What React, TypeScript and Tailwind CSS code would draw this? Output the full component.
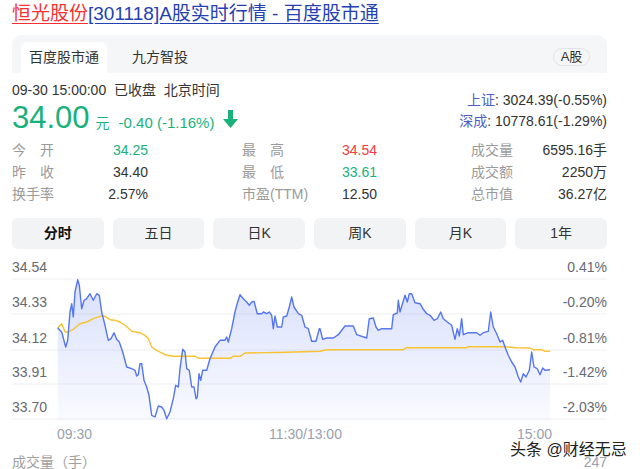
import React from "react";

// price line traced from the chart, [x, y] in 3x crop coords
const blueLeft: number[][] = [
  [173, 228], [185, 240], [197, 285], [203, 265], [210, 180], [215, 155], [220, 195], [225, 120],
  [233, 83], [238, 100], [245, 170], [252, 145], [260, 140], [270, 125], [280, 145], [290, 125],
  [298, 130], [305, 180], [315, 220], [325, 265], [333, 260], [342, 242], [350, 262], [358, 270],
  [368, 300], [380, 345], [395, 350], [405, 355], [410, 372], [415, 368], [420, 335], [425, 335],
  [432, 385], [440, 405], [447, 430], [455, 490], [465, 495], [475, 462], [485, 465], [492, 475],
  [500, 500], [510, 480], [520, 440], [527, 400], [535, 405], [540, 350], [548, 292], [555, 300],
  [560, 350], [568, 355], [575, 405], [582, 405], [588, 440], [592, 435], [597, 365], [602, 385],
  [608, 355], [620, 355], [630, 320], [645, 285], [660, 265], [675, 265], [680, 255], [685, 270],
  [695, 230], [705, 180], [710, 160], [720, 128], [730, 140], [740, 150], [748, 160], [755, 150],
  [762, 148], [772, 185], [785, 185], [790, 180], [800, 185], [808, 180], [815, 190], [820, 230],
  [825, 192], [832, 225], [845, 225], [850, 195], [860, 192], [868, 165], [875, 135], [882, 165],
  [895, 185], [905, 190], [915, 225], [925, 230], [935, 268], [948, 268], [958, 230],
];
const blueRight: number[][] = [
  [0, 230], [8, 262], [20, 258], [40, 258], [55, 248], [75, 222], [100, 222], [110, 248],
  [140, 258], [148, 200], [160, 198], [168, 225], [175, 235], [185, 230], [215, 230], [220, 188],
  [232, 183], [235, 145], [240, 180], [255, 130], [262, 150], [268, 125], [275, 125], [285, 152],
  [300, 155], [310, 172], [320, 185], [330, 190], [342, 205], [352, 200], [362, 180], [370, 200],
  [382, 210], [395, 220], [405, 262], [412, 230], [418, 252], [425, 200], [430, 248], [445, 242],
  [470, 242], [480, 250], [490, 242], [505, 238], [512, 180], [520, 225], [530, 245], [540, 270],
  [548, 265], [555, 285], [565, 310], [575, 330], [585, 345], [595, 375], [602, 390], [610, 365],
  [618, 375], [628, 355], [635, 300], [642, 345], [652, 350], [660, 368], [668, 348], [675, 355],
  [690, 353],
];
const avgLeft: number[][] = [
  [173, 228], [185, 215], [195, 240], [205, 240], [220, 232], [240, 215], [260, 210], [280, 200],
  [300, 193], [315, 193], [330, 203], [345, 205], [360, 210], [378, 222], [395, 238], [420, 242],
  [435, 250], [445, 260], [455, 285], [470, 295], [485, 303], [500, 310], [520, 313], [585, 313],
  [597, 319], [690, 319], [700, 313], [720, 313], [735, 303], [860, 301], [960, 298],
];
const avgRight: number[][] = [
  [0, 298], [20, 293], [250, 293], [260, 287], [440, 287], [445, 284], [555, 284], [590, 287],
  [630, 288], [640, 293], [665, 293], [675, 298], [690, 298],
];

const toPage = (pts: number[][], ox: number) =>
  pts.map(([x, y]) => [ox + x / 3, 250 + y / 3]);

const blue = [...toPage(blueLeft, 0), ...toPage(blueRight, 320)];
const avg = [...toPage(avgLeft, 0), ...toPage(avgRight, 320)];
const line = (pts: number[][]) =>
  pts.map(([x, y], i) => `${i ? "L" : "M"}${x.toFixed(1)} ${y.toFixed(1)}`).join(" ");

const grid = [277, 312, 348, 382, 417];
const leftLabels = ["34.54", "34.33", "34.12", "33.91", "33.70"];
const rightLabels = ["0.41%", "-0.20%", "-0.81%", "-1.42%", "-2.03%"];

function Stat({ label, value, color = "text-[#333]", spread }: { label: string; value: string; color?: string; spread?: boolean }) {
  return (
    <div className="flex justify-between">
      {spread ? (
        <span className="flex w-[42px] justify-between text-[#9a9a9a]">
          {label.split("").map((c) => (
            <span key={c}>{c}</span>
          ))}
        </span>
      ) : (
        <span className="text-[#9a9a9a]">{label}</span>
      )}
      <span className={color}>{value}</span>
    </div>
  );
}

export default function App() {
  return (
    <div
      className="relative w-[640px] h-[469px] overflow-hidden bg-white"
      style={{ fontFamily: '"Liberation Sans", "Noto Sans CJK SC", sans-serif' }}
    >
      {/* Title */}
      <div className="h-[35px] pl-[12px] pt-[1px] text-[19px] leading-[26px]">
        <a className="text-[#f73131] underline underline-offset-[3px]">恒光股份</a>
        <a className="text-[#2440b3] underline underline-offset-[3px]">[301118]A股实时行情 - 百度股市通</a>
      </div>

      {/* Tabs */}
      <div className="mx-[12px] flex h-[38px] w-[595px] items-end rounded-t-[10px] bg-[#f5f6f7] pl-[9px] pr-[17px]">
        <div className="h-[31px] w-[86px] rounded-t-[6px] bg-white text-center text-[14px] leading-[30px] text-[#333]">
          百度股市通
        </div>
        <div className="ml-[25px] h-[31px] text-[14px] leading-[30px] text-[#333]">九方智投</div>
        <div className="mb-[7px] ml-auto flex h-[18px] w-[37px] items-center justify-center rounded-full border border-[#e2e3e6] text-[13px] text-[#333]">
          A股
        </div>
      </div>

      {/* Quote */}
      <div className="mx-[12px] mt-[7px] flex w-[595px] justify-between">
        <div>
          <div className="text-[14px] leading-[20px] text-[#333]">
            09-30 15:00:00&nbsp;&nbsp;已收盘&nbsp;&nbsp;北京时间
          </div>
          <div className="mt-[3px] flex items-baseline text-[#19b17b]">
            <span className="text-[31px] leading-[30px]">34.00</span>
            <span className="ml-[6px] text-[14px]">元</span>
            <span className="ml-[9px] text-[15px]">-0.40 (-1.16%)</span>
            <svg className="ml-[9px] self-center" width="15" height="18" viewBox="0 0 15 18">
              <path d="M5 0h5v9h5l-7.5 9L0 9h5z" fill="#19b17b" />
            </svg>
          </div>
        </div>
        <div className="flex flex-col items-end pt-[10px] text-[14px] leading-[21px] text-[#333]">
          <div>
            <span className="text-[#4e5ec6]">上证</span>: 3024.39(-0.55%)
          </div>
          <div>
            <span className="text-[#4e5ec6]">深成</span>: 10778.61(-1.29%)
          </div>
        </div>
      </div>

      {/* Stats */}
      <div className="mx-[12px] mt-[4px] grid w-[595px] grid-cols-[136px_135px_136px] justify-between text-[14px] leading-[22px]">
        <div>
          <Stat label="今开" value="34.25" color="text-[#19b17b]" spread />
          <Stat label="昨收" value="34.40" spread />
          <Stat label="换手率" value="2.57%" />
        </div>
        <div>
          <Stat label="最高" value="34.54" color="text-[#f33b3b]" spread />
          <Stat label="最低" value="33.61" color="text-[#19b17b]" spread />
          <Stat label="市盈(TTM)" value="12.50" />
        </div>
        <div>
          <Stat label="成交量" value="6595.16手" />
          <Stat label="成交额" value="2250万" />
          <Stat label="总市值" value="36.27亿" />
        </div>
      </div>

      {/* Period buttons */}
      <div className="mx-[12px] mt-[13px] grid w-[595px] grid-cols-6 gap-[9px] text-[14px]">
        {["分时", "五日", "日K", "周K", "月K", "1年"].map((t, i) => (
          <div
            key={t}
            className={`flex h-[31px] items-center justify-center rounded-[6px] bg-[#f2f3f5] ${
              i === 0 ? "font-bold text-[#111]" : "text-[#333]"
            }`}
          >
            {t}
          </div>
        ))}
      </div>

      {/* Chart */}
      <svg
        className="mx-[12px] mt-[3px] block"
        width="595"
        height="195"
        viewBox="12 250 595 195"
        fontFamily='"Liberation Sans", "Noto Sans CJK SC", sans-serif'
      >
        <defs>
          <linearGradient id="fill" x1="0" y1="277" x2="0" y2="418" gradientUnits="userSpaceOnUse">
            <stop offset="0" stopColor="#4e6ef2" stopOpacity="0.22" />
            <stop offset="1" stopColor="#4e6ef2" stopOpacity="0.03" />
          </linearGradient>
        </defs>
        {grid.map((y) => (
          <line key={y} x1="12" x2="607" y1={y} y2={y} stroke="#eeeff2" strokeWidth="1" />
        ))}
        {leftLabels.map((t, i) => (
          <text key={t} x="12" y={grid[i] - 7} fontSize="14" fill="#666a73">
            {t}
          </text>
        ))}
        {rightLabels.map((t, i) => (
          <text key={t} x="607" y={grid[i] - 7} fontSize="14" fill="#666a73" textAnchor="end">
            {t}
          </text>
        ))}
        <path d={`${line(blue)} L550 418 L58 418 Z`} fill="url(#fill)" />
        <path d={line(avg)} fill="none" stroke="#f8c231" strokeWidth="1.4" strokeLinejoin="round" />
        <path d={line(blue)} fill="none" stroke="#5476f0" strokeWidth="1.4" strokeLinejoin="round" />
        <text x="57" y="437" fontSize="14" fill="#9aa0ae">09:30</text>
        <text x="269" y="437" fontSize="14" fill="#9aa0ae">11:30/13:00</text>
        <text x="552" y="437" fontSize="14" fill="#9aa0ae" textAnchor="end">15:00</text>
      </svg>

      {/* Volume header */}
      <div className="mx-[12px] mt-[5px] flex w-[595px] justify-between text-[14px] leading-[20px]">
        <span className="text-[#a0a0a0]">成交量（手）</span>
        <span className="text-[#9aa0ae]">247</span>
      </div>

      {/* Watermark */}
      <div
        className="absolute left-[510px] top-[439px] text-[16px] leading-[22px] text-[#222]"
        style={{ textShadow: "0 0 2px #fff, 0 0 2px #fff" }}
      >
        头条 @财经无忌
      </div>
    </div>
  );
}
